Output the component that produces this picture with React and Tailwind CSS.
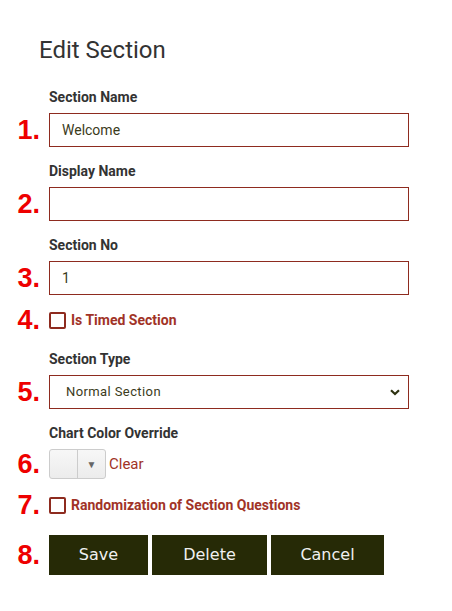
import React, { useState } from 'react';

const Num = ({ children }) => (
  <span className="w-[41px] shrink-0 pr-[1px] text-right font-['Liberation_Sans'] text-[27px] font-bold leading-none text-[#ee0000]">
    {children}
  </span>
);

const Label = ({ children, className = '' }) => (
  <div className={`pl-[49px] text-[14px] font-bold leading-[16px] text-[#333] ${className}`}>{children}</div>
);

const Checkbox = ({ checked, onChange, label }) => (
  <label className="flex cursor-pointer items-center gap-[5px]">
    <span
      onClick={onChange}
      className={`block h-[17px] w-[17px] rounded-[2px] border-2 border-[#8e2b1f] ${checked ? 'bg-[#8e2b1f]' : 'bg-white'}`}
    ></span>
    <span className="text-[14px] font-bold text-[#a13327]">{label}</span>
  </label>
);

const App = () => {
  const [sectionName, setSectionName] = useState('Welcome');
  const [displayName, setDisplayName] = useState('');
  const [sectionNo, setSectionNo] = useState('1');
  const [timed, setTimed] = useState(false);
  const [random, setRandom] = useState(false);
  const [sectionType, setSectionType] = useState('normal');

  const inputClass =
    'h-[34px] w-[360px] border border-[#8e2b1f] bg-white px-[12px] text-[14px] text-[#3b3b1b] outline-none';

  return (
    <div className="min-h-screen w-[452px] bg-white font-['Roboto',sans-serif]">
      <h1 className="pl-[39px] pt-[35px] text-[24px] font-normal leading-[30px] text-[#333]">Edit Section</h1>

      <Label className="mt-[24px]">Section Name</Label>
      <div className="mt-[8px] flex items-center gap-[8px]">
        <Num>1.</Num>
        <input className={inputClass} value={sectionName} onChange={(e) => setSectionName(e.target.value)} />
      </div>

      <Label className="mt-[16px]">Display Name</Label>
      <div className="mt-[8px] flex items-center gap-[8px]">
        <Num>2.</Num>
        <input className={inputClass} value={displayName} onChange={(e) => setDisplayName(e.target.value)} />
      </div>

      <Label className="mt-[16px]">Section No</Label>
      <div className="mt-[8px] flex items-center gap-[8px]">
        <Num>3.</Num>
        <input className={inputClass} value={sectionNo} onChange={(e) => setSectionNo(e.target.value)} />
      </div>

      <div className="mt-[13px] flex h-[24px] items-center gap-[8px]">
        <Num>4.</Num>
        <Checkbox checked={timed} onChange={() => setTimed(!timed)} label="Is Timed Section" />
      </div>

      <Label className="mt-[19px]">Section Type</Label>
      <div className="mt-[8px] flex items-center gap-[8px]">
        <Num>5.</Num>
        <div className="relative">
          <select
            className="h-[34px] w-[360px] appearance-none border border-[#8e2b1f] bg-white pl-[16px] text-[13px] tracking-[0.4px] text-[#3b3b1b] outline-none"
            value={sectionType}
            onChange={(e) => setSectionType(e.target.value)}
          >
            <option value="normal">Normal Section</option>
          </select>
          <svg className="pointer-events-none absolute right-[9px] top-[14px]" width="10" height="7" viewBox="0 0 10 7">
            <path d="M1 1.2 L5 5 L9 1.2" fill="none" stroke="#2d3210" strokeWidth="2.2" />
          </svg>
        </div>
      </div>

      <Label className="mt-[16px]">Chart Color Override</Label>
      <div className="mt-[8px] flex items-center gap-[8px]">
        <Num>6.</Num>
        <div className="flex items-center gap-[3px]">
          <div className="flex h-[30px] w-[57px] rounded-[3px] border border-[#ccc] bg-gradient-to-b from-[#f7f7f7] to-[#ececec]">
            <div className="w-[28px] border-r border-[#ccc]"></div>
            <div className="flex flex-1 items-center justify-center text-[10px] text-[#666]">▼</div>
          </div>
          <button className="text-[15px] text-[#a13327]">Clear</button>
        </div>
      </div>

      <div className="mt-[14px] flex h-[24px] items-center gap-[8px]">
        <Num>7.</Num>
        <Checkbox checked={random} onChange={() => setRandom(!random)} label="Randomization of Section Questions" />
      </div>

      <div className="mt-[18px] flex items-center gap-[8px]">
        <Num>8.</Num>
        <div className="flex gap-[4px]">
          <button className="h-[40px] w-[99px] bg-[#262a06] font-['DejaVu_Sans'] text-[16px] text-[#f0f0f0]">Save</button>
          <button className="h-[40px] w-[115px] bg-[#262a06] font-['DejaVu_Sans'] text-[16px] text-[#f0f0f0]">Delete</button>
          <button className="h-[40px] w-[113px] bg-[#262a06] font-['DejaVu_Sans'] text-[16px] text-[#f0f0f0]">Cancel</button>
        </div>
      </div>
    </div>
  );
};

export default App;
